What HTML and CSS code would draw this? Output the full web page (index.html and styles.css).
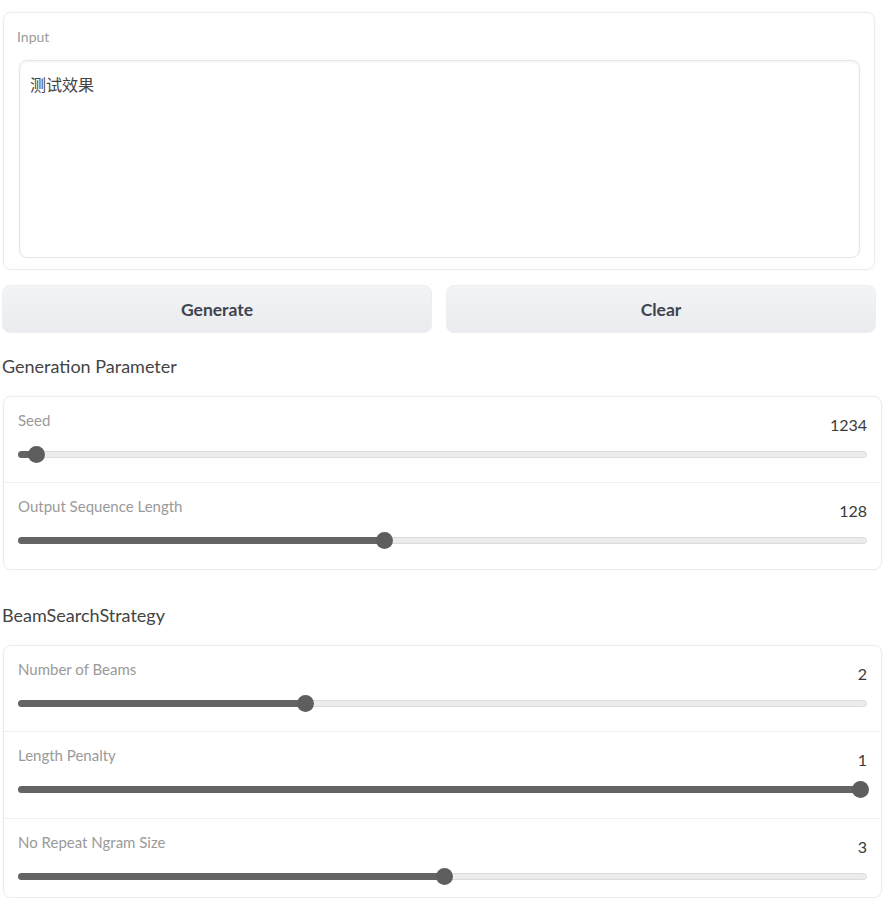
FILE: index.html
```html
<!DOCTYPE html>
<html lang="en">
<head>
<meta charset="utf-8">
<title>Generation</title>
<link rel="stylesheet" href="styles.css">
</head>
<body>
<div class="page">
  <div class="input-panel">
    <div class="label">Input</div>
    <div class="textarea">测试效果</div>
  </div>
  <div class="buttons">
    <button class="btn">Generate</button>
    <button class="btn">Clear</button>
  </div>
  <div class="section-title">Generation Parameter</div>
  <div class="panel">
    <div class="row">
      <div class="row-head"><span class="label">Seed</span><span class="value">1234</span></div>
      <div class="track"><div class="fill" style="width:17px"></div><div class="thumb" style="left:17px"></div></div>
    </div>
    <div class="row">
      <div class="row-head"><span class="label">Output Sequence Length</span><span class="value">128</span></div>
      <div class="track"><div class="fill" style="width:365px"></div><div class="thumb" style="left:365px"></div></div>
    </div>
  </div>
  <div class="section-title second">BeamSearchStrategy</div>
  <div class="panel last">
    <div class="row">
      <div class="row-head"><span class="label">Number of Beams</span><span class="value">2</span></div>
      <div class="track"><div class="fill" style="width:286px"></div><div class="thumb" style="left:286px"></div></div>
    </div>
    <div class="row">
      <div class="row-head"><span class="label">Length Penalty</span><span class="value">1</span></div>
      <div class="track"><div class="fill" style="width:842px"></div><div class="thumb" style="left:841px"></div></div>
    </div>
    <div class="row">
      <div class="row-head"><span class="label">No Repeat Ngram Size</span><span class="value">3</span></div>
      <div class="track"><div class="fill" style="width:425px"></div><div class="thumb" style="left:425px"></div></div>
    </div>
  </div>
</div>
</body>
</html>
```
FILE: styles.css
```css
* { box-sizing: border-box; }
html, body { margin: 0; padding: 0; background: #ffffff; }
body {
  font-family: "Lato", "Noto Sans CJK SC", sans-serif;
  color: #444;
}
.page {
  width: 892px;
  padding: 12px 0 0 2px;
}
.input-panel {
  margin-left: 1px;
  width: 872px;
  height: 258px;
  border: 1px solid #ececec;
  border-radius: 8px;
  padding: 14px 15px 12px 13px;
  box-shadow: 0 0 3px rgba(0,0,0,0.04);
}
.label {
  font-size: 15px;
  color: #9a9a9a;
  line-height: 20px;
}
.input-panel .label { font-size: 14px; }
.textarea {
  margin-top: 13px;
  margin-left: 2px;
  height: 198px;
  width: 841px;
  border: 1px solid #e6e6e6;
  border-radius: 8px;
  box-shadow: inset 0 1px 3px rgba(0,0,0,0.05), 0 0 3px rgba(0,0,0,0.04);
  padding: 12px 10px;
  font-size: 16px;
  line-height: 22px;
  color: #444;
  font-family: "Noto Sans CJK SC", sans-serif;
}
.buttons {
  display: flex;
  gap: 14px;
  margin-top: 15px;
  width: 874px;
}
.btn {
  flex: 1;
  height: 48px;
  border: 1px solid #eceef1;
  border-radius: 8px;
  background: linear-gradient(180deg, #f3f4f6, #e9ebee);
  font-family: "Lato", sans-serif;
  font-weight: 700;
  font-size: 17.5px;
  color: #3f4450;
  padding: 0;
}
.section-title {
  margin-top: 21px;
  font-size: 18px;
  line-height: 24px;
  color: #444;
}
.section-title.second { margin-top: 33px; }
.panel {
  margin-top: 18px;
  margin-left: 1px;
  width: 879px;
  border: 1px solid #ececec;
  border-radius: 8px;
  box-shadow: 0 0 3px rgba(0,0,0,0.04);
}
.row {
  height: 87px;
  padding: 13px 14px 0 14px;
  border-top: 1px solid #efefef;
}
.row:first-child { border-top: none; height: 85px; }
.panel.last .row:last-child { height: 79px; }
.row-head {
  display: flex;
  justify-content: space-between;
  align-items: flex-end;
  height: 25px;
}
.row-head .label { align-self: flex-start; }
.value {
  font-size: 16px;
  color: #3a3a3a;
  line-height: 20px;
}
.track {
  position: relative;
  margin-top: 16px;
  height: 7px;
  border: 1px solid #dcdcdc;
  background: #ececec;
  border-radius: 4px;
}
.fill {
  height: 7px;
  margin: -1px 0 0 -1px;
  background: #646464;
  border-radius: 4px;
}
.thumb {
  position: absolute;
  top: 50%;
  width: 17px;
  height: 17px;
  margin: -8.5px 0 0 -8.5px;
  border-radius: 50%;
  background: #5e5e5e;
}
```
